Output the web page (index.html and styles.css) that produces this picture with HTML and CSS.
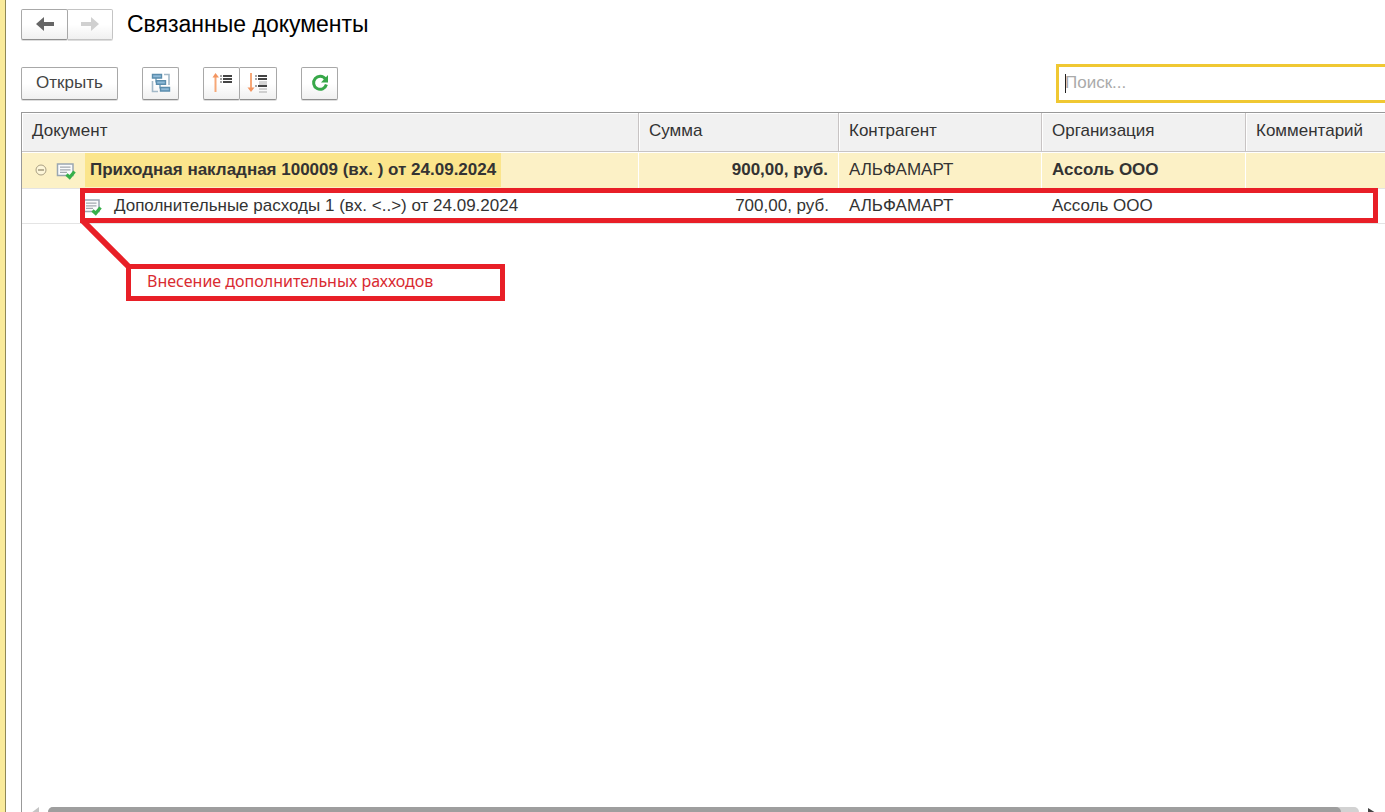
FILE: index.html
```html
<!DOCTYPE html>
<html lang="ru">
<head>
<meta charset="utf-8">
<title>Связанные документы</title>
<link rel="stylesheet" href="styles.css">
</head>
<body>
<svg class="defs" aria-hidden="true">
  <symbol id="doc" viewBox="0 0 20 18">
    <path d="M1.500 2h15.500v11.500h-15.500z" fill="#fafbfc" stroke="#9aa7b1" stroke-width="1.500"/>
    <path d="M4 5.200h10.500M4 7.800h10.500M4 10.400h7" stroke="#a3a9ae" stroke-width="1.200"/>
    <path d="M10.500 12.500l3.200 3 4.800-6" fill="none" stroke="#36b04a" stroke-width="3.200"/>
  </symbol>
</svg>
<main class="window">
  <header class="titlebar">
    <div class="group">
      <button class="btn nav" type="button" aria-label="Назад">
        <svg width="18" height="14" viewBox="0 0 18 14"><path d="M0 7L8 0V5h10v4H8v5z" fill="#666"/></svg>
      </button>
      <button class="btn nav nav-next" type="button" aria-label="Вперед" disabled>
        <svg width="18" height="14" viewBox="0 0 18 14"><path d="M18 7L10 0V5H0v4H10v5z" fill="#d0d0d0"/></svg>
      </button>
    </div>
    <h1 class="title">Связанные документы</h1>
  </header>

  <div class="toolbar">
    <button class="btn open" type="button">Открыть</button>
    <button class="btn tool" type="button" aria-label="Структура">
      <svg width="20" height="20" viewBox="0 0 20 20">
        <path d="M13 1.500h5V12M1.500 8v10.500h5.500" fill="none" stroke="#a3b9c8" stroke-width="1.600"/>
        <path d="M5 5v4h4M9 10v5h4" fill="none" stroke="#5b8dad" stroke-width="1.200"/>
        <path d="M1.500 1.500h9v3.500h-9zM5.500 7.800h9v3.500h-9zM9.500 14.500h9v3.500h-9z" fill="#8fbad8" stroke="#5b8dad" stroke-width="1.400"/>
      </svg>
    </button>
    <div class="group">
      <button class="btn tool" type="button" aria-label="Свернуть">
        <svg width="22" height="22" viewBox="0 0 22 22">
          <path d="M4.500 20V4" stroke="#f6a878" stroke-width="2"/><path d="M1.500 5.500L4.500 1l3.500 4.500z" fill="#f39560"/>
          <path d="M12 4h9M12 7h9M12 10h9" stroke="#444" stroke-width="1.900"/>
          <path d="M9 4h2M9 7h2M9 10h2" stroke="#888" stroke-width="1.600"/>
        </svg>
      </button>
      <button class="btn tool" type="button" aria-label="Развернуть">
        <svg width="22" height="22" viewBox="0 0 22 22">
          <path d="M4 1v16" stroke="#f6a878" stroke-width="2"/><path d="M.5 15.500h7L4 20z" fill="#f39560"/>
          <path d="M11 4h9M11 7h9M11 14h9" stroke="#444" stroke-width="1.900"/>
          <path d="M8 4h2M8 7h2M8 14h2" stroke="#888" stroke-width="1.600"/>
          <path d="M12 10h8M12 12h8M12 17h8M12 20h8" stroke="#aaa" stroke-width="1.200"/>
        </svg>
      </button>
    </div>
    <button class="btn tool" type="button" aria-label="Обновить">
      <svg width="18" height="18" viewBox="0 0 18 18">
        <path d="M14.400 5A6.500 6.500 0 1 0 15.400 10.500" fill="none" stroke="#37a849" stroke-width="3"/>
        <path d="M17 1v7.500H10z" fill="#37a849"/>
      </svg>
    </button>
    <div class="search">
      <input class="search-input" type="text" placeholder="Поиск..." aria-label="Поиск">
      <span class="caret"></span>
    </div>
  </div>

  <section class="panel">
    <table class="grid">
      <colgroup><col class="c-doc"><col class="c-sum"><col class="c-partner"><col class="c-org"><col></colgroup>
      <thead>
        <tr><th>Документ</th><th>Сумма</th><th>Контрагент</th><th>Организация</th><th>Комментарий</th></tr>
      </thead>
      <tbody>
        <tr class="selected">
          <td class="doc-cell"><div class="doc">
            <button class="toggle" type="button" aria-label="Свернуть строку">
              <svg width="12" height="12" viewBox="0 0 12 12"><circle cx="6" cy="6" r="5" fill="#fdf6d8" stroke="#a99f83"/><path d="M3 6h6" stroke="#8c8266" stroke-width="1.200"/></svg>
            </button>
            <svg class="doc-icon" width="20" height="18"><use href="#doc"/></svg>
            <span class="current">Приходная накладная 100009 (вх. ) от 24.09.2024</span>
          </div></td>
          <td class="num">900,00, руб.</td><td class="plain">АЛЬФАМАРТ</td><td>Ассоль ООО</td><td></td>
        </tr>
        <tr>
          <td class="doc-cell"><div class="doc child">
            <svg class="doc-icon" width="20" height="18"><use href="#doc"/></svg>
            <span class="name">Дополнительные расходы 1 (вх. &lt;..&gt;) от 24.09.2024</span>
          </div></td>
          <td class="num">700,00, руб.</td><td>АЛЬФАМАРТ</td><td>Ассоль ООО</td><td></td>
        </tr>
      </tbody>
    </table>
    <div class="mark"></div>
    <svg class="leader" width="52" height="52" viewBox="0 0 52 52"><path d="M3 3L49 49" stroke="#e81f27" stroke-width="6"/></svg>
    <div class="note">Внесение дополнительных рахходов</div>
    <div class="scroll">
      <svg width="8" height="6" viewBox="0 0 8 6"><path d="M8 0v6H0z" fill="#c4c4c4"/></svg>
      <div class="track"><div class="thumb"></div></div>
      <svg width="8" height="6" viewBox="0 0 8 6"><path d="M0 1v5h8z" fill="#444"/></svg>
    </div>
  </section>
</main>
</body>
</html>
```
FILE: styles.css
```css
* { box-sizing: border-box; }
body {
  margin: 0;
  background: #fff;
  color: #333;
  font: 17px/20px "Liberation Sans", Arial, sans-serif;
}
svg { display: block; flex: none; }
.defs { width: 0; height: 0; position: absolute; }
.window {
  height: 100vh;
  display: flex;
  flex-direction: column;
  padding: 9px 0 0 16px;
  border-left: 5px solid #faeb9b;
  box-shadow: inset 1px 0 #8f8856;
  overflow: hidden;
}
.titlebar { display: flex; align-items: center; gap: 14px; height: 31px; }
.title { margin: 0; padding-bottom: 2px; font-size: 23px; line-height: 28px; font-weight: 400; color: #000; }
.group { display: flex; }
.btn {
  display: flex;
  align-items: center;
  justify-content: center;
  height: 33px;
  padding: 0 0 1px;
  border: 1px solid #a8a8a8;
  border-bottom-color: #8f8f8f;
  border-radius: 2px;
  background: linear-gradient(#fff 50%, #f0f0f0);
  box-shadow: 0 1px #ddd;
  color: #444;
  font: inherit;
}
.group .btn + .btn { border-left: 0; border-radius: 0 2px 2px 0; }
.nav { width: 47px; height: 31px; }
.nav-next { width: 45px; border-color: #c4c4c4; }
.toolbar { display: flex; align-items: center; gap: 24px; margin-top: 24px; height: 39px; }
.open { width: 97px; }
.tool { width: 37px; }
.search { position: relative; margin-left: auto; width: 329px; flex: none; }
.search-input {
  display: block;
  width: 100%;
  height: 39px;
  padding: 0 6px 2px;
  border: 3px solid #f0c832;
  border-right: 0;
  border-radius: 0;
  outline: 0;
  background: #fff;
  color: #333;
  font: inherit;
}
.search-input::placeholder { color: #aaa; opacity: 1; }
.caret { position: absolute; left: 9px; top: 10px; width: 1px; height: 19px; background: #222; }

.panel {
  position: relative;
  flex: 1;
  display: flex;
  flex-direction: column;
  margin-top: 9px;
  border: solid #999;
  border-width: 1px 0 0 1px;
}
.grid { width: 100%; table-layout: fixed; border-collapse: separate; border-spacing: 0; }
.c-doc { width: 617px; }
.c-sum { width: 200px; }
.c-partner { width: 203px; }
.c-org { width: 204px; }
th {
  height: 39px;
  padding: 0 10px 3px;
  border: solid #c8c4c4;
  border-width: 0 1px 1px 0;
  background: #f1f1f1;
  box-shadow: inset 1px 1px #fff;
  text-align: left;
  font-weight: 400;
  white-space: nowrap;
}
td { height: 35px; padding: 0 10px; border-bottom: 1px solid #e4e4e4; white-space: nowrap; }
th:last-child { border-right: 0; }
.selected td {
  height: 37px;
  background: #fcf1c6;
  border-right: 1px solid #fff;
  box-shadow: inset 0 1px #fff;
  font-weight: 700;
}
.selected td:last-child { border-right: 0; }
.selected .plain { font-weight: 400; }
.num { text-align: right; }
.grid .doc-cell { padding: 0; }
.doc { display: flex; align-items: center; height: 34px; padding-left: 13px; }
.toggle { padding: 0; border: 0; background: none; margin-right: 9px; }
.doc-icon { margin-top: 2px; }
.current { margin-left: 9px; padding: 0 5px; line-height: 34px; background: #fbe58c; }
.child { padding-left: 60px; }
.name { margin-left: 12px; }

.mark { position: absolute; left: 58px; right: 7px; top: 75px; height: 35px; border: 5px solid #e81f27; }
.leader { position: absolute; left: 58px; top: 105px; }
.note {
  position: absolute;
  left: 104px;
  top: 151px;
  width: 379px;
  padding: 2px 16px 5px;
  border: 5px solid #e81f27;
  color: #d92b32;
  font: 16px/20px "Noto Sans", "Open Sans", sans-serif;
}
.scroll { display: flex; gap: 9px; margin-top: auto; padding: 0 9px; height: 5px; overflow: hidden; }
.track { flex: 1; height: 12px; border-radius: 5px; background: #d2d2d2; }
.thumb { width: calc(100% - 18px); height: 12px; border-radius: 5px; background: #9e9e9e; }
```
